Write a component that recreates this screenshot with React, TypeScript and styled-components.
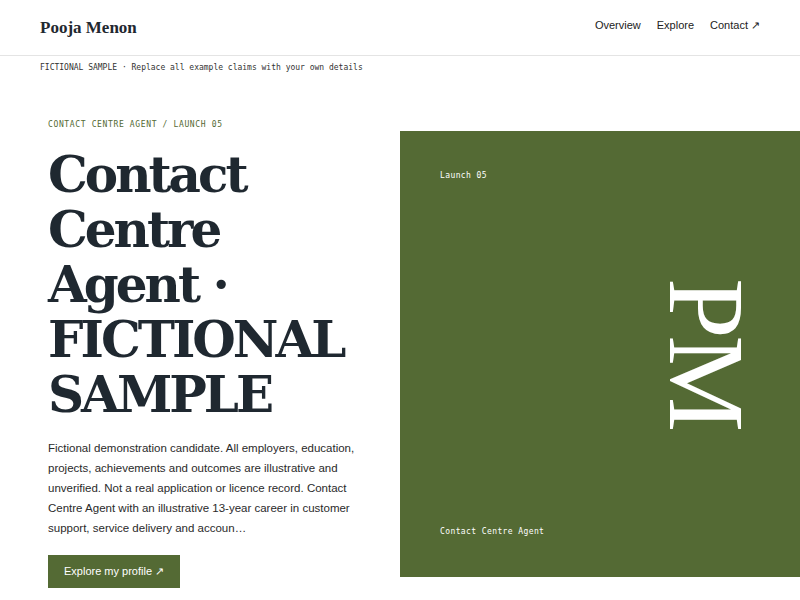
import React from "react";
import styled, { createGlobalStyle } from "styled-components";

const GREEN = "#546a34";
const INK = "#1f2830";

const Global = createGlobalStyle`
  html, body { margin: 0; padding: 0; background: #ffffff; }
  body { font-family: "Liberation Sans", Arial, sans-serif; color: #222; }
  * { box-sizing: border-box; }
`;

const Page = styled.div`
  width: 800px;
  min-height: 600px;
  background: #fff;
`;

const Header = styled.header`
  height: 56px;
  padding: 0 40px;
  display: flex;
  align-items: center;
  justify-content: space-between;
  border-bottom: 1px solid #e4e4e4;
`;

const Brand = styled.div`
  font-family: "Liberation Serif", "Times New Roman", serif;
  font-weight: 700;
  font-size: 17px;
  color: ${INK};
  padding-top: 1px;
`;

const Nav = styled.nav`
  display: flex;
  gap: 16px;
  padding-bottom: 5px;
`;

const NavLink = styled.a`
  font-family: "Liberation Sans", Arial, sans-serif;
  font-size: 11px;
  color: #222;
  text-decoration: none;
`;

const Banner = styled.div`
  padding: 6px 40px;
  font-family: "DejaVu Sans Mono", monospace;
  font-size: 8px;
  line-height: 12px;
  color: #333;
`;

const Hero = styled.section`
  display: grid;
  grid-template-columns: 1fr 400px;
  align-items: center;
  padding-top: 39px;
`;

const Intro = styled.div`
  padding-left: 48px;
  padding-right: 40px;
  display: flex;
  flex-direction: column;
  align-items: flex-start;
`;

const Eyebrow = styled.div`
  font-family: "DejaVu Sans Mono", monospace;
  font-size: 8px;
  line-height: 12px;
  letter-spacing: 0.08em;
  color: ${GREEN};
  margin-bottom: 16px;
`;

const Title = styled.h1`
  margin: 0;
  font-family: "DejaVu Serif", Georgia, serif;
  font-weight: 700;
  font-size: 50px;
  line-height: 55px;
  letter-spacing: -3px;
  color: ${INK};
  max-width: 312px;
`;

const Lead = styled.p`
  margin: 16px 0 0;
  font-family: "Liberation Sans", Arial, sans-serif;
  font-size: 11.5px;
  line-height: 20px;
  color: #2a2a2a;
  max-width: 312px;
`;

const Button = styled.a`
  margin-top: 17px;
  height: 33px;
  padding: 0 16px;
  display: inline-flex;
  align-items: center;
  background: ${GREEN};
  color: #fff;
  font-family: "Liberation Sans", Arial, sans-serif;
  font-size: 11px;
  text-decoration: none;
`;

const Panel = styled.div`
  height: 446px;
  background: ${GREEN};
  display: grid;
  grid-template-columns: 1fr auto;
  padding: 39px 39px 39px 40px;
`;

const PanelLabels = styled.div`
  display: flex;
  flex-direction: column;
  justify-content: space-between;
`;

const PanelLabel = styled.div`
  font-family: "DejaVu Sans Mono", monospace;
  font-size: 8px;
  line-height: 12px;
  letter-spacing: 0.05em;
  color: #fff;
`;

const Monogram = styled.div`
  align-self: center;
  writing-mode: vertical-rl;
  font-family: "Liberation Serif", "Times New Roman", serif;
  font-size: 109px;
  line-height: 1;
  letter-spacing: -0.03em;
  color: #fff;
`;

export default function App() {
  return (
    <Page>
      <Global />
      <Header>
        <Brand>Pooja Menon</Brand>
        <Nav>
          <NavLink href="#">Overview</NavLink>
          <NavLink href="#">Explore</NavLink>
          <NavLink href="#">Contact ↗</NavLink>
        </Nav>
      </Header>
      <Banner>FICTIONAL SAMPLE · Replace all example claims with your own details</Banner>
      <Hero>
        <Intro>
          <Eyebrow>CONTACT CENTRE AGENT / LAUNCH 05</Eyebrow>
          <Title>Contact Centre Agent&nbsp;· FICTIONAL SAMPLE</Title>
          <Lead>
            Fictional demonstration candidate. All employers, education, projects,
            achievements and outcomes are illustrative and unverified. Not a real
            application or licence record. Contact Centre Agent with an illustrative
            13-year career in customer support, service delivery and accoun…
          </Lead>
          <Button href="#">Explore my profile ↗</Button>
        </Intro>
        <Panel>
          <PanelLabels>
            <PanelLabel>Launch 05</PanelLabel>
            <PanelLabel>Contact Centre Agent</PanelLabel>
          </PanelLabels>
          <Monogram>PM</Monogram>
        </Panel>
      </Hero>
    </Page>
  );
}
